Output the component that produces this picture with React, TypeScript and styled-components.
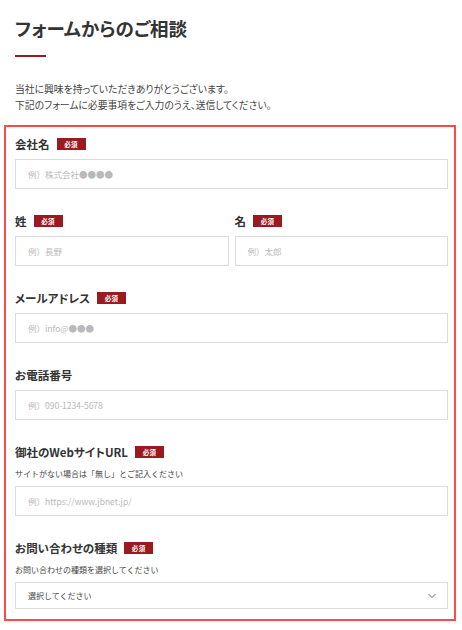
import React from "react";
import styled, { createGlobalStyle } from "styled-components";

const Global = createGlobalStyle`
  html, body { margin: 0; padding: 0; background: #fff; }
  body {
    font-family: "Noto Sans CJK JP", "Noto Sans", sans-serif;
    color: #333;
    -webkit-font-smoothing: antialiased;
  }
  * { box-sizing: border-box; }
`;

const Page = styled.div`
  width: 462px;
  padding: 0 0 0 4px;
`;

const Intro = styled.div`
  padding-left: 11px;
`;

const Title = styled.h1`
  margin: 0;
  padding-top: 14px;
  font-size: 18.5px;
  line-height: 28px;
  font-weight: 700;
  color: #333;
  font-feature-settings: "palt";
`;

const Rule = styled.div`
  width: 31px;
  height: 2px;
  background: #9b1b1f;
  margin-top: 13px;
`;

const Lead = styled.p`
  margin: 24px 0 0;
  font-size: 9.8px;
  line-height: 16px;
  color: #444;
  font-feature-settings: "palt";
`;

const FormBox = styled.form`
  margin-top: 12px;
  width: 452px;
  border: 2px solid #ff4848;
  padding: 11px 6px 10px 9px;
  display: flex;
  flex-direction: column;
  gap: 26px;
`;

const Row = styled.div`
  display: grid;
  grid-template-columns: 1fr 1fr;
  column-gap: 6px;
`;

const Field = styled.div`
  display: flex;
  flex-direction: column;
`;

const LabelRow = styled.div`
  display: flex;
  align-items: center;
  gap: 7px;
  height: 12px;
  margin-bottom: 9px;
`;

const Label = styled.label`
  font-size: 11.5px;
  font-weight: 700;
  color: #333;
  line-height: 12px;
  white-space: nowrap;
  font-feature-settings: "palt";
`;

const Badge = styled.span`
  display: inline-flex;
  align-items: center;
  justify-content: center;
  width: 29px;
  height: 12px;
  background: #9b1a1f;
  color: #fff;
  font-size: 6.5px;
  font-weight: 700;
  letter-spacing: 0.05em;
`;

const Note = styled.p`
  margin: -1px 0 4px;
  font-size: 8px;
  line-height: 16px;
  color: #444;
`;

const Input = styled.input`
  width: 100%;
  height: 30px;
  border: 1px solid #dcdcdc;
  padding: 0 12px;
  font-family: "Noto Sans CJK JP", "Noto Sans", sans-serif;
  font-size: 8.5px;
  color: #333;
  outline: none;
  background: #fff;
  &::placeholder { color: #b9b9b9; }
`;

const SelectWrap = styled.div`
  position: relative;
  height: 27px;
  border: 1px solid #dcdcdc;
  display: flex;
  align-items: center;
  padding: 0 12px;
  font-size: 8px;
  color: #444;
`;

const Chevron = styled.svg`
  position: absolute;
  right: 11px;
  top: 50%;
  transform: translateY(-50%);
`;

function Req() {
  return <Badge>必須</Badge>;
}

export default function App() {
  return (
    <Page>
      <Global />
      <Intro>
        <Title>フォームからのご相談</Title>
        <Rule />
        <Lead>
          当社に興味を持っていただきありがとうございます。
          <br />
          下記のフォームに必要事項をご入力のうえ、送信してください。
        </Lead>
      </Intro>
      <FormBox onSubmit={(e) => e.preventDefault()}>
        <Field>
          <LabelRow>
            <Label>会社名</Label>
            <Req />
          </LabelRow>
          <Input placeholder="例）株式会社●●●●" />
        </Field>
        <Row>
          <Field>
            <LabelRow>
              <Label>姓</Label>
              <Req />
            </LabelRow>
            <Input placeholder="例）長野" />
          </Field>
          <Field>
            <LabelRow>
              <Label>名</Label>
              <Req />
            </LabelRow>
            <Input placeholder="例）太郎" />
          </Field>
        </Row>
        <Field>
          <LabelRow>
            <Label>メールアドレス</Label>
            <Req />
          </LabelRow>
          <Input placeholder="例）info@●●●" />
        </Field>
        <Field>
          <LabelRow>
            <Label>お電話番号</Label>
          </LabelRow>
          <Input placeholder="例）090-1234-5678" />
        </Field>
        <Field>
          <LabelRow>
            <Label>御社のWebサイトURL</Label>
            <Req />
          </LabelRow>
          <Note>サイトがない場合は「無し」とご記入ください</Note>
          <Input placeholder="例）https://www.jbnet.jp/" />
        </Field>
        <Field>
          <LabelRow>
            <Label>お問い合わせの種類</Label>
            <Req />
          </LabelRow>
          <Note>お問い合わせの種類を選択してください</Note>
          <SelectWrap>
            選択してください
            <Chevron width="8" height="5" viewBox="0 0 8 5">
              <path d="M0.5 0.5 L4 4 L7.5 0.5" fill="none" stroke="#666" strokeWidth="1" />
            </Chevron>
          </SelectWrap>
        </Field>
      </FormBox>
    </Page>
  );
}
